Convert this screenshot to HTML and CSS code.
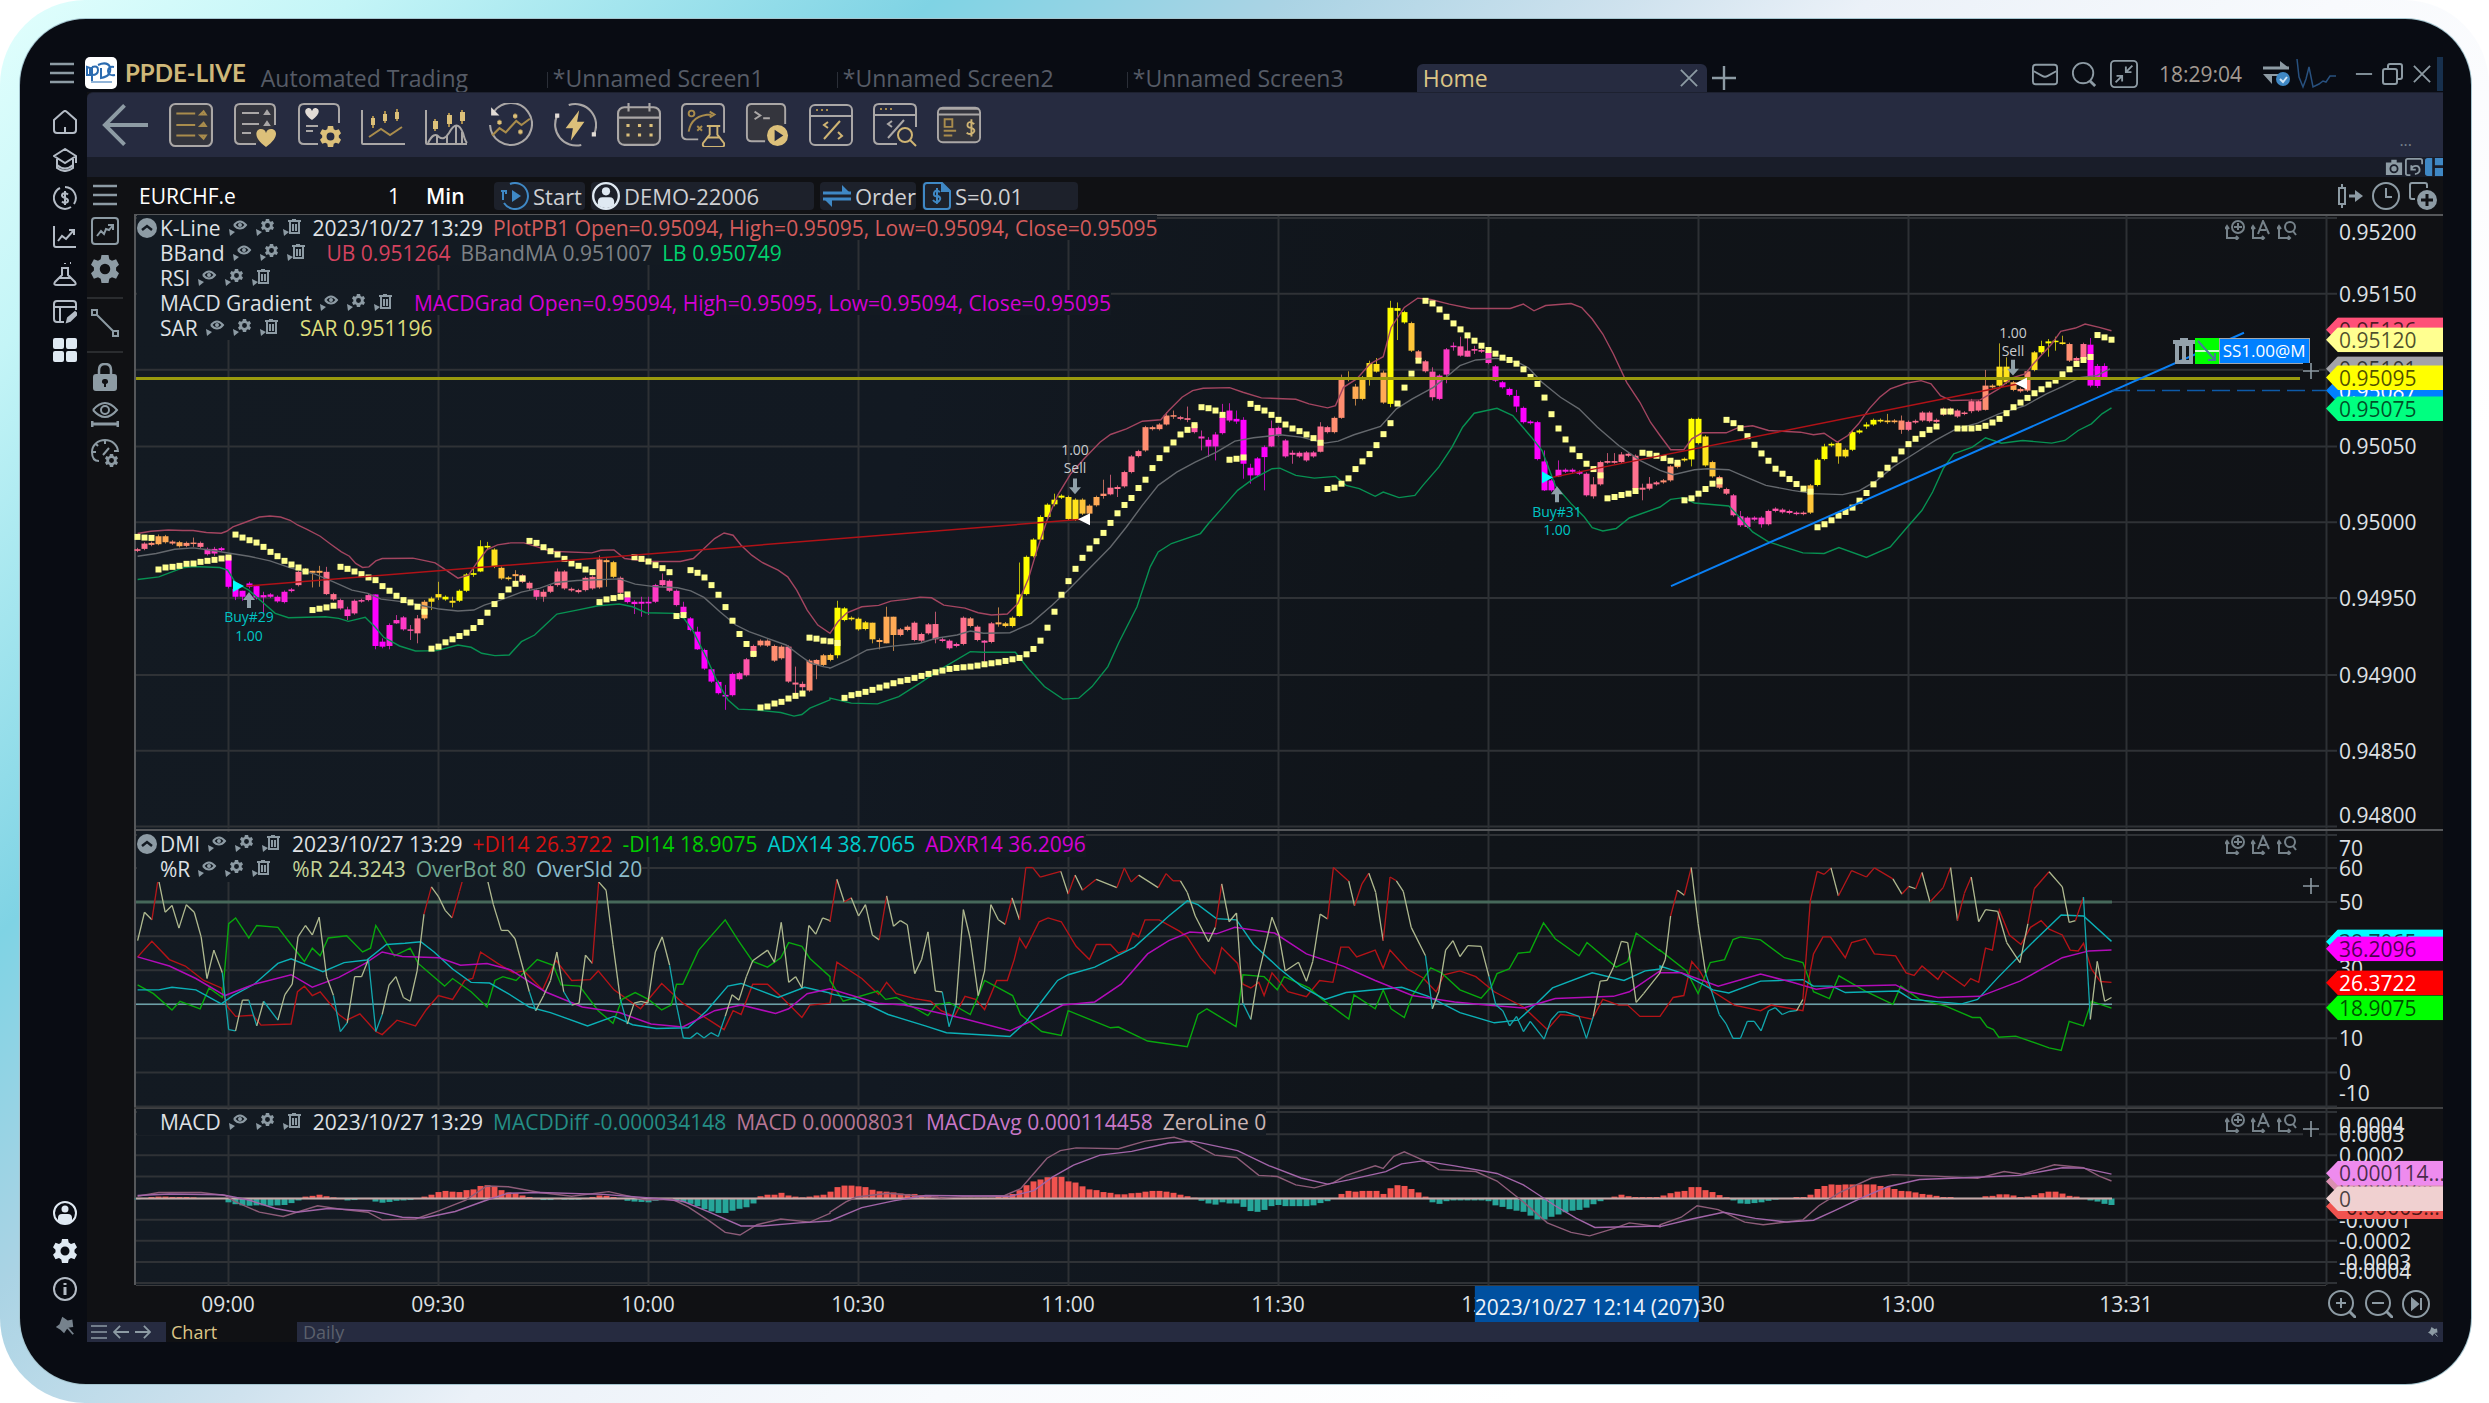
FILE: index.html
```html
<!doctype html>
<html lang="en">
	<head>
		<meta charset="utf-8" />
		<title>PPDE-LIVE</title>
		<link rel="stylesheet" href="styles.css">
	</head>
	<body>
		<!-- icon sprite -->
		<svg class="sprite" aria-hidden="true">
			<symbol id="menu" viewBox="0 0 24 24"><path d="M0 3h24M0 12h24M0 21h24" stroke-width="2.5"/></symbol>
			<symbol id="home" viewBox="0 0 24 24"><path d="M1 10 10 2q2-2 4 0l9 8v10q0 3-3 3H4q-3 0-3-3zM12 17v6"/></symbol>
			<symbol id="cap" viewBox="0 0 24 24"><path d="M12 1 1 8l11 7 11-7zM4 11v6q8 7 16 0v-6M23 8v7M4 17v3q8 6 16 0v-3"/></symbol>
			<symbol id="coin" viewBox="0 0 24 24"><path d="M12 1a11 11 0 0 1 9 17M18 21A11 11 0 1 1 7 2M15 8.500c-2-2-6-1.500-6 1 0 3 6 2 6 5 0 2.500-4 3-6 1M12 5v14"/></symbol>
			<symbol id="trend" viewBox="0 0 24 24"><path d="M1 2v19q0 2 2 2h20M5 17l4-5 4 3 8-9M16 6h5v5"/></symbol>
			<symbol id="flask" viewBox="0 0 24 24"><path d="M8 6h8M9 6v7L2 20q-2 3 2 3h16q4 0 2-3l-7-7V6M6 16h12M12 1v1M17 1h1"/></symbol>
			<symbol id="layout" viewBox="0 0 24 24"><path d="M11 22H4q-3 0-3-3V4q0-3 3-3h16q3 0 3 3v6M1 7h22M7 7v15"/><path d="m14 22 1-4 7-6 2 2-7 7z" fill="currentColor"/></symbol>
			<symbol id="grid" viewBox="0 0 24 24"><path fill="currentColor" stroke="none" d="M2 0h7q2 0 2 2v7q0 2-2 2H2q-2 0-2-2V2q0-2 2-2M15 0h7q2 0 2 2v7q0 2-2 2h-7q-2 0-2-2V2q0-2 2-2M2 13h7q2 0 2 2v7q0 2-2 2H2q-2 0-2-2v-7q0-2 2-2M15 13h7q2 0 2 2v7q0 2-2 2h-7q-2 0-2-2v-7q0-2 2-2"/></symbol>
			<symbol id="user" viewBox="0 0 24 24"><circle cx="12" cy="12" r="11"/><circle cx="12" cy="8" r="3.500" fill="currentColor" stroke="none"/><path fill="currentColor" stroke="none" d="M5 20v-3q0-4 4-4h6q4 0 4 4v3q-7 5-14 0"/></symbol>
			<symbol id="cog" viewBox="0 0 24 24"><path fill="currentColor" stroke="none" fill-rule="evenodd" d="M9 0h6l.7 3.600 2.300 1.300 3.500-1.200 2.500 4.600-2.500 2.500v2.400l2.500 2.500-2.500 4.600-3.500-1.200-2.300 1.300L15 24H9l-.7-3.600L6 19.100l-3.500 1.200L0 15.700l2.500-2.500v-2.400L0 8.300l2.500-4.600L6 4.900l2.300-1.300zM12 7.500a4.500 4.500 0 1 0 0 9 4.500 4.500 0 0 0 0-9"/></symbol>
			<symbol id="info" viewBox="0 0 24 24"><circle cx="12" cy="12" r="11"/><path d="M12 10v8M12 6v2" stroke-width="3"/></symbol>
			<symbol id="pin" viewBox="0 0 24 24"><path fill="currentColor" stroke="none" d="m9 2 6 4 5-1 1 8-6 1-4 6-4-4-5-3 4-3z"/><path d="m14 13 7 8"/></symbol>
			<symbol id="chartbox" viewBox="0 0 28 28"><rect x="1" y="1" width="26" height="26" rx="3"/><path d="m6 19 4-5 3 3 2-5 3 1 4-5M17 8h5v5"/></symbol>
			<symbol id="line" viewBox="0 0 28 28"><path d="M1 1h5v5H1zM22 22h5v5h-5zM6 6l16 16"/></symbol>
			<symbol id="lock" viewBox="0 0 24 28"><path d="M6 12V7q0-6 6-6t6 6v5" stroke-width="2.500"/><path fill="currentColor" stroke="none" fill-rule="evenodd" d="M3 11h18q3 0 3 3v11q0 3-3 3H3q-3 0-3-3V14q0-3 3-3m9 5a2.500 2.500 0 0 0-1 5v3h2v-3a2.500 2.500 0 0 0-1-5"/></symbol>
			<symbol id="eye" viewBox="0 0 28 28"><path d="M2 9q12-14 24 0-12 14-24 0"/><circle cx="14" cy="9" r="4"/><path d="M1 20v6M27 20v6M1 23h26" stroke-width="3"/></symbol>
			<symbol id="gauge" viewBox="0 0 28 28"><path d="M8 22Q1 22 1 13a13 12 0 0 1 26 0M14 1v4M1 13h4M23 12h4M12 16l6-7M5 5l2 2"/><use href="#cog" x="14" y="15" width="13" height="13"/></symbol>

			<symbol id="back" viewBox="0 0 48 42"><path d="M23 1 3 21l20 20M3 21h44" stroke-width="4"/></symbol>
			<symbol id="t-list" viewBox="0 0 42 42"><rect class="shade" x="1" y="1" width="40" height="40" rx="5"/><path class="gold" d="M7 10h18M7 21h18M7 31h18M30 11h5l-2-3zM30 22h5l-2-3zM30 31h5l-2 3z"/></symbol>
			<symbol id="t-fav" viewBox="0 0 42 44"><path class="shade" d="M22 41H6q-5 0-5-5V6q0-5 5-5h30q5 0 5 5v16"/><path d="M8 10h17M8 21h17M8 30h9M31 11h4l-2-3zM31 22h4l-2-3z"/><path class="goldFill" d="M32 44C18 34 22 26 27 26q4 0 5 4 1-4 5-4c6 0 9 8-5 18"/></symbol>
			<symbol id="t-favset" viewBox="0 0 42 44"><path d="M20 41H6q-5 0-5-5V6q0-5 5-5h30q5 0 5 5v14M8 23h12M8 28h7"/><path class="lightFill" d="M14 17C4 10 7 5 11 5q2 0 3 3 1-3 3-3c4 0 7 5-3 12"/><use href="#cog" x="22" y="23" width="21" height="21" class="goldIcon"/></symbol>
			<symbol id="t-candles" viewBox="0 0 44 42"><path d="M1 6v33q0 1 1 1h42"/><path class="gold" d="m8 33 12-8 9 6 12-8M12 12v12M24 7v12M36 5v12"/><path class="goldFill" d="M10 14h4v7h-4zM22 10h4v7h-4zM34 8h4v7h-4z"/></symbol>
			<symbol id="t-dist" viewBox="0 0 44 42"><path d="M1 6v33q0 1 1 1h40M3 39q6-12 11-6 5 4 10-4 8-15 14 0 2 8 4 10M31 22v17M12 32v7M22 32v7M37 28v11"/><path class="gold" d="M10 15v12M24 9v14M37 6v14"/><path class="goldFill" d="M8 17h5v8H8zM22 11h5v9h-5zM35 8h5v9h-5z"/></symbol>
			<symbol id="t-history" viewBox="0 0 42 42"><path d="M5 8a20 20 0 1 1-4 13"/><path class="lightFill" d="M2 4v8h8z"/><path class="gold" d="m3 31 7-7 6 4 10-11 5 4 8-6M10 16v5M25 10v5M30 25v5"/><path class="goldFill" d="M8 17h4v3H8zM23 11h4v3h-4zM28 26h4v3h-4z"/></symbol>
			<symbol id="t-flash" viewBox="0 0 42 42"><path d="M15 2a20 20 0 0 1 24 28M27 40A20 20 0 0 1 4 12"/><path class="lightFill" d="M2 10h4v4H2zM37 28h4v4h-4z"/><path class="goldFill" d="M25 7 12 24h7l-2 12 13-18h-7z"/></symbol>
			<symbol id="t-cal" viewBox="0 0 42 42"><rect class="shade" x="1" y="4" width="40" height="36" rx="6"/><path d="M11 0v8M31 0v8M1 14h40"/><path class="goldFill" d="M9 20h3v3H9zM20 20h3v3h-3zM31 20h3v3h-3zM9 29h3v3H9zM20 29h3v3h-3zM31 29h3v3h-3z"/></symbol>
			<symbol id="t-lab" viewBox="0 0 46 46"><path d="M18 38H6q-5 0-5-5V6q0-5 5-5h34q5 0 5 5v25"/><path class="gold" d="M8 30q3-18 24-18M30 9l5 3-5 3M17 24l5 5M22 24l-5 5"/><circle class="gold" cx="11" cy="11" r="3"/><path class="goldLine" d="M27 24h14M30 24v9l-7 9q-1 4 3 4h16q4 0 3-4l-7-9v-9M28 36h12"/></symbol>
			<symbol id="t-term" viewBox="0 0 44 46"><path class="shade" d="M20 40H6q-5 0-5-5V6q0-5 5-5h30q5 0 5 5v16"/><path d="m9 9 6 4-6 4M18 16h7"/><circle class="goldFill" cx="33" cy="34" r="11"/><path fill="#262b40" stroke="none" d="M30 28v12l9-6z"/></symbol>
			<symbol id="t-code" viewBox="0 0 44 42"><rect x="1" y="1" width="42" height="40" rx="5"/><path d="M1 12h42"/><path class="gold" d="M7 6h2M12 6h2M17 6h2"/><path class="goldLine" d="M31 17 15 35M19 18l-4 3 4 3M29 28l4 4-4 3"/></symbol>
			<symbol id="t-find" viewBox="0 0 44 44"><path d="M24 41H6q-5 0-5-5V6q0-5 5-5h32q5 0 5 5v18M1 12h42M31 17 15 35M19 18l-4 3 4 3"/><path class="gold" d="M7 6h2M12 6h2M17 6h2"/><circle class="goldLine" cx="32" cy="32" r="7"/><path class="goldLine" d="m37 37 6 6"/></symbol>
			<symbol id="t-pay" viewBox="0 0 46 40"><rect class="shade" x="1" y="2" width="44" height="36" rx="5"/><path d="M1 9h44M2 3h42"/><path class="gold" d="M8 14h8v8H8zM7 26h13M7 31h9"/><path class="goldLine" d="M39 19q-6-4-7 0t4 4q5 2 2 5t-7 0M36 14v18"/></symbol>

			<symbol id="mail" viewBox="0 0 28 24"><rect x="1" y="2" width="26" height="21" rx="3"/><path d="m2 9 9 5q3 2 6 0l9-5"/></symbol>
			<symbol id="search" viewBox="0 0 28 28"><circle cx="13" cy="13" r="11"/><path d="m20 21 6 6" stroke-width="3"/></symbol>
			<symbol id="collapse" viewBox="0 0 30 30"><rect x="1" y="1" width="28" height="28" rx="4"/><path d="m24 6-7 7M17 7v6h6M6 24l7-7M7 17h6v6"/></symbol>
			<symbol id="sync" viewBox="0 0 28 26"><path d="M0 7h26" stroke-width="3"/><path fill="currentColor" stroke="none" d="m17 0 9 7h-9zM0 13h15v2H9v8z"/><circle cx="20" cy="18" r="7" fill="#3f88c5" stroke="none"/><path stroke="#cfe4f5" d="m17 18 3 3 4-5"/></symbol>
			<symbol id="spark" viewBox="0 0 40 30"><path stroke="#28517f" stroke-width="1.500" d="m1 0 2 18 4 10 3-8 3-12 4 20 6-3 4-3 3 1 4-6h6"/></symbol>
			<symbol id="min" viewBox="0 0 20 20"><path d="M1 10h18"/></symbol>
			<symbol id="restore" viewBox="0 0 22 22"><rect x="1" y="6" width="14" height="15" rx="2"/><path d="M6 6V3q0-2 2-2h10q2 0 2 2v11q0 2-2 2h-3"/></symbol>
			<symbol id="close" viewBox="0 0 20 20"><path d="m1 1 18 18M19 1 1 19"/></symbol>
			<symbol id="plus" viewBox="0 0 20 20"><path d="M10 0v20M0 10h20"/></symbol>
			<symbol id="camera" viewBox="0 0 20 20"><path fill="currentColor" stroke="none" d="M7 2h6v3h6v14H1V5h6z"/><circle cx="10" cy="12" r="4" stroke="#191d29"/></symbol>
			<symbol id="reload" viewBox="0 0 20 20"><path d="M6 19H3q-2 0-2-2V3q0-2 2-2h14q2 0 2 2v4M7 12q2-4 7-3 3 2 2 6-2 3-5 3M7 8v5h5"/></symbol>
			<symbol id="tiles" viewBox="0 0 20 20"><path fill="#3f88c5" stroke="none" d="M3 0h5v20H3q-3 0-3-3V3q0-3 3-3M11 0h9v8h-9zM11 11h9v9h-9z"/></symbol>
			<symbol id="candleto" viewBox="0 0 26 24"><path d="M5 0v4M5 20v4M2 4h6v16H2z"/><path d="M12 12h8" stroke-width="3"/><path fill="currentColor" stroke="none" d="m18 6 8 6-8 6z"/></symbol>
			<symbol id="clock" viewBox="0 0 28 28"><circle cx="14" cy="14" r="13"/><path d="M14 6v9h6"/></symbol>
			<symbol id="addpage" viewBox="0 0 28 28"><path d="M6 17H3q-2 0-2-2V3q0-2 2-2h13q2 0 2 2v3"/><circle cx="18" cy="18" r="10" fill="currentColor" stroke="none"/><path stroke="#101114" stroke-width="3" d="M18 12v12M12 18h12"/></symbol>
			<symbol id="start" viewBox="0 0 28 28"><path d="M9 2a13 13 0 1 1-6 19M2 18v-9M0 9h5v3"/><path fill="currentColor" stroke="none" d="M11 8v12l9-6z"/></symbol>
			<symbol id="swap" viewBox="0 0 28 22"><path d="M0 8h28M0 14h28" stroke-width="3"/><path fill="currentColor" stroke="none" d="m19 0 8 8h-8zM1 14h8v8z"/></symbol>
			<symbol id="doc" viewBox="0 0 28 28"><path d="M19 1H4q-3 0-3 3v20q0 3 3 3h20q3 0 3-3V9M17 10q-5-3-6 1t4 3q4 2 1 5t-6-1M14 6v16"/><path fill="currentColor" d="M19 1v8h8z"/></symbol>
			<symbol id="up" viewBox="0 0 20 20"><circle cx="10" cy="10" r="10" fill="currentColor" stroke="none"/><path stroke="#131a22" stroke-width="2.500" d="m5 12 5-4 5 4"/></symbol>
			<symbol id="l-eye" viewBox="0 0 20 20"><path d="M6 7q6-7 12 0-6 7-12 0" /><circle cx="12" cy="7" r="1"/><path fill="currentColor" stroke="none" d="m1 11 6 3-5 4z"/></symbol>
			<symbol id="l-cog" viewBox="0 0 20 20"><use href="#cog" x="6" y="1" width="13" height="13"/><path fill="currentColor" stroke="none" d="m1 11 6 3-5 4z"/></symbol>
			<symbol id="l-bin" viewBox="0 0 20 20"><path d="M6 3h13M10 2h4M8 4v11h9V4M11 6v7M14 6v7"/><path fill="currentColor" stroke="none" d="m1 11 6 3-5 4z"/></symbol>
			<symbol id="s-plus" viewBox="0 0 20 20"><path d="M2 7v11h11M0 9l2-3 2 3M11 16l2 2-2 2M13 3v7M9 7h8"/><circle cx="13" cy="7" r="6"/></symbol>
			<symbol id="s-auto" viewBox="0 0 20 20"><path d="M2 7v11h11M0 9l2-3 2 3M11 16l2 2-2 2"/><path d="m7 14 5-13 6 13M9 10h6" stroke-width="2"/></symbol>
			<symbol id="s-find" viewBox="0 0 20 20"><path d="M2 7v11h11M0 9l2-3 2 3M11 16l2 2-2 2M16 11l3 4"/><circle cx="13" cy="7" r="5"/></symbol>
			<symbol id="zoomin" viewBox="0 0 28 28"><circle cx="13" cy="13" r="12"/><path d="m21 21 7 7" stroke-width="3"/><path d="M13 8v10M8 13h10"/></symbol>
			<symbol id="zoomout" viewBox="0 0 28 28"><circle cx="13" cy="13" r="12"/><path d="m21 21 7 7" stroke-width="3"/><path d="M7 13h12"/></symbol>
			<symbol id="last" viewBox="0 0 28 28"><circle cx="14" cy="14" r="13"/><path fill="currentColor" d="M10 9v10l6-5zM19 8v12"/></symbol>
			<symbol id="bin" viewBox="0 0 22 26"><path fill="currentColor" stroke="none" fill-rule="evenodd" d="M7 0h8v2h7v4h-2v20H2V6H0V2h7zM6 8v14h3V8zM13 8v14h3V8z"/></symbol>
			<symbol id="arrowl" viewBox="0 0 18 18"><path d="M8 2 1 9l7 7M1 9h17"/></symbol>
			<symbol id="arrowr" viewBox="0 0 18 18"><path d="m10 2 7 7-7 7M17 9H0"/></symbol>
		</svg>

		<div class="device">
			<div class="screen">
				<header class="titlebar">
					<button class="iconBtn" aria-label="Menu"><svg class="i24"><use href="#menu"/></svg></button>
					<svg class="logo" viewBox="0 0 32 32"><rect width="32" height="32" rx="5" fill="#fff"/><path d="M2 10v8h3v-7zM7 10v14M7 10q6-2 6 3t-6 5M13 8q9-4 12 2 2 9-9 11V11M29 10q-6-1-6 4t7 4" fill="none" stroke="#2b6bb0" stroke-width="2"/><path d="M6 25h21" stroke="#6d9bcb" stroke-width="1.500"/></svg>
					<h1 class="brand">PPDE-LIVE</h1>
					<nav class="tabs">
						<button class="tab">Automated Trading</button>
						<button class="tab">*Unnamed Screen1</button>
						<button class="tab">*Unnamed Screen2</button>
						<button class="tab">*Unnamed Screen3</button>
						<button class="tab active">Home <svg class="i18"><use href="#close"/></svg></button>
					</nav>
					<button class="iconBtn newTab" aria-label="New tab"><svg class="i24"><use href="#plus"/></svg></button>
					<div class="status">
						<button class="iconBtn" aria-label="Mail"><svg class="i26"><use href="#mail"/></svg></button>
						<button class="iconBtn" aria-label="Search"><svg class="i26"><use href="#search"/></svg></button>
						<button class="iconBtn" aria-label="Exit full screen"><svg class="i28"><use href="#collapse"/></svg></button>
						<time class="clock">18:29:04</time>
						<svg class="i28"><use href="#sync"/></svg>
						<svg class="spark"><use href="#spark"/></svg>
						<div class="windowBtns">
							<button class="iconBtn" aria-label="Minimize"><svg class="i18"><use href="#min"/></svg></button>
							<button class="iconBtn" aria-label="Restore"><svg class="i22"><use href="#restore"/></svg></button>
							<button class="iconBtn" aria-label="Close"><svg class="i18"><use href="#close"/></svg></button>
						</div>
						<span class="edge"></span>
					</div>
				</header>

				<div class="body">
					<nav class="sidenav">
						<button class="iconBtn" aria-label="Home"><svg class="i24"><use href="#home"/></svg></button>
						<button class="iconBtn" aria-label="Academy"><svg class="i24"><use href="#cap"/></svg></button>
						<button class="iconBtn" aria-label="Funds"><svg class="i24"><use href="#coin"/></svg></button>
						<button class="iconBtn" aria-label="Charts"><svg class="i24"><use href="#trend"/></svg></button>
						<button class="iconBtn" aria-label="Lab"><svg class="i24"><use href="#flask"/></svg></button>
						<button class="iconBtn" aria-label="Layouts"><svg class="i24"><use href="#layout"/></svg></button>
						<button class="iconBtn bright" aria-label="Apps"><svg class="i24"><use href="#grid"/></svg></button>
						<span class="spacer"></span>
						<button class="iconBtn bright" aria-label="Account"><svg class="i24"><use href="#user"/></svg></button>
						<button class="iconBtn bright" aria-label="Settings"><svg class="i24"><use href="#cog"/></svg></button>
						<button class="iconBtn" aria-label="About"><svg class="i24"><use href="#info"/></svg></button>
						<button class="iconBtn dim" aria-label="Pin"><svg class="i22"><use href="#pin"/></svg></button>
					</nav>

					<main class="workspace">
						<div class="toolbar">
							<button class="iconBtn" aria-label="Back"><svg class="back"><use href="#back"/></svg></button>
							<button class="toolBtn" aria-label="Watch list"><svg><use href="#t-list"/></svg></button>
							<button class="toolBtn" aria-label="Favorites"><svg><use href="#t-fav"/></svg></button>
							<button class="toolBtn" aria-label="Favorite settings"><svg><use href="#t-favset"/></svg></button>
							<button class="toolBtn" aria-label="Chart"><svg><use href="#t-candles"/></svg></button>
							<button class="toolBtn" aria-label="Distribution"><svg><use href="#t-dist"/></svg></button>
							<button class="toolBtn" aria-label="History"><svg><use href="#t-history"/></svg></button>
							<button class="toolBtn" aria-label="Quick trade"><svg><use href="#t-flash"/></svg></button>
							<button class="toolBtn" aria-label="Calendar"><svg><use href="#t-cal"/></svg></button>
							<button class="toolBtn" aria-label="Strategy lab"><svg><use href="#t-lab"/></svg></button>
							<button class="toolBtn" aria-label="Run script"><svg><use href="#t-term"/></svg></button>
							<button class="toolBtn" aria-label="Editor"><svg><use href="#t-code"/></svg></button>
							<button class="toolBtn" aria-label="Inspect script"><svg><use href="#t-find"/></svg></button>
							<button class="toolBtn" aria-label="Payments"><svg><use href="#t-pay"/></svg></button>
							<span class="more">...</span>
						</div>
						<div class="strip">
							<button class="iconBtn" aria-label="Snapshot"><svg class="i18"><use href="#camera"/></svg></button>
							<button class="iconBtn" aria-label="Reload"><svg class="i18"><use href="#reload"/></svg></button>
							<button class="iconBtn" aria-label="Tiles"><svg class="i18"><use href="#tiles"/></svg></button>
						</div>

						<div class="content">
							<div class="tools">
								<button class="iconBtn" aria-label="Tool menu"><svg class="i24"><use href="#menu"/></svg></button>
								<button class="iconBtn" aria-label="Indicator"><svg class="i28"><use href="#chartbox"/></svg></button>
								<button class="iconBtn" aria-label="Chart settings"><svg class="i28"><use href="#cog"/></svg></button>
								<hr />
								<button class="iconBtn" aria-label="Trend line"><svg class="i28"><use href="#line"/></svg></button>
								<hr />
								<button class="iconBtn" aria-label="Lock"><svg class="i28"><use href="#lock"/></svg></button>
								<button class="iconBtn" aria-label="Show drawings"><svg class="i28"><use href="#eye"/></svg></button>
								<button class="iconBtn" aria-label="Speed"><svg class="i28"><use href="#gauge"/></svg></button>
							</div>

							<section class="chart">
								<div class="instrument">
									<input class="symbol" type="text" value="EURCHF.e" aria-label="Symbol" />
									<input class="count" type="text" value="1" aria-label="Interval" />
									<span class="unit">Min</span>
									<button class="pill start"><svg class="i28 blue"><use href="#start"/></svg>Start</button>
									<button class="pill account"><svg class="i28 bright"><use href="#user"/></svg>DEMO-22006</button>
									<button class="pill order"><svg class="i28 blue"><use href="#swap"/></svg>Order</button>
									<button class="pill size"><svg class="i28 blue"><use href="#doc"/></svg>S=0.01</button>
									<span class="right">
										<button class="iconBtn" aria-label="Shift"><svg class="i26"><use href="#candleto"/></svg></button>
										<button class="iconBtn" aria-label="Time"><svg class="i28"><use href="#clock"/></svg></button>
										<button class="iconBtn" aria-label="Add"><svg class="i28"><use href="#addpage"/></svg></button>
									</span>
								</div>

								<div class="panel price" id="price">
									<div class="plot">
										<svg class="canvas" preserveAspectRatio="none"></svg>
										<div class="legend">
											<div class="row"><svg class="i20 fold"><use href="#up"/></svg><b>K-Line</b><i class="acts"></i><span>2023/10/27 13:29</span><span class="coral">PlotPB1 Open=0.95094, High=0.95095, Low=0.95094, Close=0.95095</span></div>
											<div class="row"><b>BBand</b><i class="acts wide"></i><span class="rose">UB 0.951264</span><span class="gray">BBandMA 0.951007</span><span class="green">LB 0.950749</span></div>
											<div class="row"><b>RSI</b><i class="acts"></i></div>
											<div class="row"><b>MACD Gradient</b><i class="acts wide"></i><span class="magenta">MACDGrad Open=0.95094, High=0.95095, Low=0.95094, Close=0.95095</span></div>
											<div class="row"><b>SAR</b><i class="acts wide"></i><span class="yellow">SAR 0.951196</span></div>
										</div>
										<div class="orderTag">
											<svg class="bin"><use href="#bin"/></svg>
											<svg class="dir" viewBox="0 0 24 26"><rect width="24" height="26" fill="#00ff00"/><path d="M0 13h24" stroke="#c8ffc8" stroke-width="2"/><path d="m3 3 17 19M20 15v7h-7" stroke="#4a7a9a" stroke-width="2" fill="none"/></svg>
											<span>SS1.00@M</span>
										</div>
									</div>
									<div class="axis"></div>
								</div>

								<div class="panel dmi" id="dmi">
									<div class="plot">
										<svg class="canvas" preserveAspectRatio="none"></svg>
										<div class="legend">
											<div class="row"><svg class="i20 fold"><use href="#up"/></svg><b>DMI</b><i class="acts"></i><span>2023/10/27 13:29</span><span class="red">+DI14 26.3722</span><span class="lime">-DI14 18.9075</span><span class="cyan">ADX14 38.7065</span><span class="magenta">ADXR14 36.2096</span></div>
											<div class="row"><b>%R</b><i class="acts wide"></i><span class="cream">%R 24.3243</span><span class="sage">OverBot 80</span><span class="sky">OverSld 20</span></div>
										</div>
									</div>
									<div class="axis"></div>
								</div>

								<div class="panel macd" id="macd">
									<div class="plot">
										<svg class="canvas" preserveAspectRatio="none"></svg>
										<div class="legend">
											<div class="row"><b>MACD</b><i class="acts"></i><span>2023/10/27 13:29</span><span class="teal">MACDDiff -0.000034148</span><span class="mauve">MACD 0.00008031</span><span class="violet">MACDAvg 0.000114458</span><span class="pale">ZeroLine 0</span></div>
										</div>
									</div>
									<div class="axis"></div>
								</div>

								<div class="timeAxis">
									<div class="times" id="times"></div>
									<div class="zoomBtns">
										<button class="iconBtn" aria-label="Zoom in"><svg class="i28"><use href="#zoomin"/></svg></button>
										<button class="iconBtn" aria-label="Zoom out"><svg class="i28"><use href="#zoomout"/></svg></button>
										<button class="iconBtn" aria-label="Go to last"><svg class="i28"><use href="#last"/></svg></button>
									</div>
								</div>
							</section>
						</div>

						<footer class="sheets">
							<span class="sheetNav">
								<button class="iconBtn" aria-label="Sheets"><svg class="i16"><use href="#menu"/></svg></button>
								<button class="iconBtn" aria-label="Previous"><svg class="i16"><use href="#arrowl"/></svg></button>
								<button class="iconBtn" aria-label="Next"><svg class="i16"><use href="#arrowr"/></svg></button>
							</span>
							<button class="sheet active">Chart</button>
							<button class="sheet">Daily</button>
							<svg class="i12 sheetPin"><use href="#pin"/></svg>
						</footer>
					</main>
				</div>
			</div>
		</div>

		<script type="text/javascript" src="chart.js"></script>
	</body>
</html>
```

FILE: styles.css
```css
* {
	box-sizing: border-box;
}

body {
	margin: 0;
	min-height: 100vh;
	display: flex;
	background: #ffffff;
	font-family: "Open Sans", "Noto Sans", sans-serif;
	font-size: 21px;
	line-height: 24px;
	color: #dfe1e5;
}

button, input {
	font: inherit;
	color: inherit;
	background: none;
	border: none;
	padding: 0;
	margin: 0;
}

button {
	cursor: pointer;
}

svg {
	display: block;
	flex: none;
	fill: none;
	stroke: currentColor;
	stroke-width: 2;
}

.sprite {
	position: absolute;
	width: 0;
	height: 0;
}

.i12 { width: 12px; height: 12px; }
.i16 { width: 16px; height: 16px; }
.i18 { width: 18px; height: 18px; }
.i20 { width: 20px; height: 20px; }
.i22 { width: 22px; height: 22px; }
.i24 { width: 24px; height: 24px; }
.i26 { width: 26px; height: 26px; }
.i28 { width: 28px; height: 28px; }

.iconBtn {
	display: flex;
	flex: none;
	color: #8d9ba4;
}

.bright { color: #dfe9f2; }
.blue { color: #3f88c5; }
.dim { color: #76828c; }

.gold { stroke: #a98c4c; fill: none; }
.goldLine { stroke: #cfb473; fill: none; }
.goldFill { stroke: none; fill: #dcc07a; }
.goldIcon { color: #dcc07a; }
.lightFill { stroke: none; fill: #e2dcd6; }
.shade { fill: #34353d; }

/* device frame */

.device {
	flex: 1;
	display: flex;
	padding: 19px 18px 19px 20px;
	border-radius: 85px;
	background: linear-gradient(135deg, #e2fffd 0%, #c4f5f7 9%, #7fd3e4 24%, #aad3e4 33%, #cfe2ee 42%, #ebf1f8 48%, #f8fafd 60%, #ffffff 75%);
}

.screen {
	flex: 1;
	min-width: 0;
	display: flex;
	flex-direction: column;
	padding-bottom: 42px;
	border-radius: 66px;
	background: #090c13;
	box-shadow: 0 0 0 1px #a5c5cf;
}

.titlebar {
	display: flex;
	align-items: flex-end;
	height: 73px;
	padding: 0 28px 0 30px;
}

.titlebar > .iconBtn {
	margin-bottom: 7px;
}

.logo {
	width: 32px;
	height: 32px;
	margin: 0 8px 3px 11px;
	stroke: none;
}

.brand {
	margin: 0 15px 4px 0;
	font-family: Lato, sans-serif;
	font-size: 24px;
	line-height: 30px;
	font-weight: 700;
	color: #cfb879;
	white-space: nowrap;
}

.tabs {
	display: flex;
	align-items: flex-end;
}

.tab {
	width: 290px;
	height: 28px;
	padding: 0 9px 0 6px;
	display: flex;
	align-items: center;
	justify-content: space-between;
	font-size: 23px;
	line-height: 28px;
	color: #565b66;
	text-align: left;
	white-space: nowrap;
	background: linear-gradient(#2b2f38, #2b2f38) 0 70% / 1px 16px no-repeat;
}

.tab:first-child {
	width: 286px;
	padding-left: 0;
	background: none;
}

.tab.active {
	color: #dcc587;
	background: #262b40;
	border-radius: 6px 6px 0 0;
}

.tab.active svg {
	color: #8d9ba4;
}

.titlebar > .newTab {
	margin: 0 0 2px 5px;
}

.status {
	margin-left: auto;
	height: 36px;
	display: flex;
	align-items: center;
	gap: 13px;
	color: #8d9ba4;
}

.clock {
	margin: 0 8px;
	color: #a29a92;
}

.spark {
	width: 40px;
	height: 32px;
	margin-left: -8px;
}

.windowBtns {
	display: flex;
	align-items: center;
	gap: 9px;
	margin-left: 6px;
}

.edge {
	width: 6px;
	height: 34px;
	margin-left: -7px;
	background: #17304d;
}

/* left navigation and workspace */

.body {
	flex: 1;
	display: flex;
	min-height: 0;
	padding-right: 28px;
}

.sidenav {
	width: 67px;
	padding: 18px 0 5px;
	display: flex;
	flex-direction: column;
	align-items: center;
	gap: 14px;
}

.sidenav .iconBtn {
	margin-left: 22px;
}

.sidenav .iconBtn:not(.bright):not(.dim) {
	color: #b4bcc6;
}

.spacer {
	flex: 1;
}

.workspace {
	flex: 1;
	min-width: 0;
	display: flex;
	flex-direction: column;
	background: #101114;
}

.toolbar {
	height: 65px;
	display: flex;
	align-items: center;
	gap: 20px;
	padding: 0 15px;
	background: #262b40;
	border-top: 1px solid #1d2130;
	border-top-left-radius: 6px;
}

.toolBtn {
	color: #aaa7a6;
}

.toolBtn svg {
	width: 44px;
	height: 44px;
}

.back {
	width: 47px;
	height: 42px;
}

.more {
	margin: 30px 16px 0 auto;
	font-size: 16px;
	color: #76828c;
}

.strip {
	height: 20px;
	display: flex;
	justify-content: flex-end;
	align-items: center;
	gap: 2px;
	background: #191d29;
}

.content {
	flex: 1;
	min-height: 0;
	display: flex;
}

.tools {
	width: 47px;
	display: flex;
	flex-direction: column;
	align-items: center;
	gap: 10px;
	padding: 6px 11px 0 0;
}

.tools hr {
	width: 36px;
	margin: 4px 0 0;
	border: none;
	border-top: 2px solid #2a2c2f;
	align-self: flex-start;
}

.chart {
	flex: 1;
	min-width: 0;
	display: flex;
	flex-direction: column;
}

.instrument {
	height: 37px;
	display: flex;
	align-items: center;
	gap: 6px;
	padding: 0 6px 0 5px;
	color: #ffffff;
}

.symbol { width: 200px; }
.count { width: 75px; padding-right: 20px; text-align: right; }
.unit { width: 62px; font-weight: 600; }

.pill {
	height: 28px;
	display: flex;
	align-items: center;
	gap: 4px;
	border-radius: 4px;
	background: #1d212b;
	color: #cfd0d3;
	font-size: 22px;
	white-space: nowrap;
}

.pill.start { width: 91px; padding-left: 7px; }
.pill.account { width: 223px; padding-left: 1px; }
.pill.order { width: 96px; padding-left: 3px; }
.pill.size { width: 156px; padding-left: 1px; }

.right {
	margin-left: auto;
	display: flex;
	align-items: center;
	gap: 9px;
}

/* chart panels */

.panel {
	display: flex;
	min-height: 0;
	border-top: 2px solid #55575a;
}

.price { flex: 616 1 0; }
.dmi { flex: 278 1 0; }
.macd { flex: 177 1 0; border-top-color: #404143; }

.plot {
	position: relative;
	flex: 1;
	min-width: 0;
	border-left: 2px solid #55575a;
	background: linear-gradient(100deg, #131a22 0%, #121922 35%, #101419 60%, #101216 100%);
}

.canvas {
	position: absolute;
	width: 100%;
	height: 100%;
	overflow: visible;
	stroke-width: 1;
}

.canvas * {
	vector-effect: non-scaling-stroke;
}

.legend {
	position: relative;
	width: fit-content;
	padding: 1px 0 0 1px;
}

.price .legend {
	padding-top: 0;
	margin-top: -1px;
}

.row {
	width: fit-content;
	height: 25px;
	display: flex;
	align-items: center;
	padding-left: 23px;
	white-space: nowrap;
	background: #131a22;
}

.row b {
	font-weight: 400;
	color: #dfe1e5;
}

.row span {
	margin-right: 10px;
}

.row span:last-child {
	margin-right: 0;
}

.fold {
	margin: 0 3px 0 -23px;
	color: #8d9ba4;
}

.acts {
	display: flex;
	gap: 7px;
	margin: 0 11px 0 7px;
	color: #8d9ba4;
}

.acts.wide {
	margin-right: 21px;
}

.coral { color: #d45c5c; }
.rose { color: #d5425f; }
.gray { color: #7d8186; }
.green { color: #00d26f; }
.magenta { color: #d400d4; }
.yellow { color: #dddd7c; }
.red { color: #d41111; }
.lime { color: #00cc00; }
.cyan { color: #00cccc; }
.cream { color: #c5d498; }
.sage { color: #6fa58f; }
.sky { color: #8cbccb; }
.teal { color: #238e86; }
.mauve { color: #b77796; }
.violet { color: #c878c8; }
.pale { color: #cbb5b5; }

.scaleBtns {
	position: absolute;
	top: 4px;
	right: 29px;
	display: flex;
	gap: 6px;
	color: #76828a;
}

.addMark {
	position: absolute;
	width: 16px;
	height: 16px;
	transform: translate(-50%, -50%);
	color: #8d9ba4;
	background: #101216;
}

.mark {
	position: absolute;
	transform: translate(-50%, -50%);
	font-size: 14px;
	line-height: 18px;
	color: #c9cbce;
}

.mark.buy {
	color: #00c4c4;
}

.orderTag {
	position: absolute;
	left: 93%;
	top: 20%;
	height: 26px;
	display: flex;
	margin-top: -1px;
}

.orderTag .bin { width: 22px; height: 26px; color: #93a1ab; }
.orderTag .dir { width: 24px; height: 26px; stroke: none; }

.orderTag span {
	padding: 0 3px;
	font-size: 17px;
	line-height: 24px;
	color: #ffffff;
	background: #0080ff;
	border: 1px solid #a0a6ae;
}

.axis {
	position: relative;
	width: 117px;
	overflow: hidden;
}

.axis .tick {
	position: absolute;
	left: 13px;
	transform: translateY(-50%);
}

.axis .tag {
	position: absolute;
	left: 0;
	right: 0;
	height: 25px;
	padding-left: 13px;
	transform: translateY(-50%);
	line-height: 25px;
	color: rgba(0, 0, 0, 0.7);
	white-space: nowrap;
	clip-path: polygon(12px 0, 100% 0, 100% 100%, 12px 100%, 0 50%);
}

.timeAxis {
	height: 37px;
	display: flex;
}

.times {
	position: relative;
	flex: 1;
	margin-left: 2px;
	border-top: 1px solid #3a3b3d;
}

.times span {
	position: absolute;
	top: 50%;
	transform: translate(-50%, -50%);
}

.times .cursor {
	height: 100%;
	padding: 5px 0 0;
	line-height: 32px;
	color: #eef3f8;
	background: #0050a0;
	white-space: nowrap;
}

.zoomBtns {
	width: 117px;
	display: flex;
	align-items: center;
	gap: 9px;
	padding-left: 2px;
}

.sheets {
	height: 20px;
	display: flex;
	align-items: center;
	background: #262b40;
}

.sheetNav {
	display: flex;
	gap: 6px;
	width: 79px;
	padding-left: 4px;
}

.sheet {
	height: 20px;
	padding: 0 6px;
	font-size: 18px;
	line-height: 20px;
	color: #5b606c;
}

.sheet.active {
	width: 131px;
	padding: 0 5px;
	text-align: left;
	color: #dcc587;
	background: #101114;
}

.sheetPin {
	margin: 0 4px 0 auto;
	color: #8d9ba4;
}
```

FILE: chart.js
```js
const NS = "http://www.w3.org/2000/svg";
const X0 = 137.5;	//first bar
const STEP = 7;		//bar spacing

const panels = {
	price: {x: 136, y: 215, w: 2190, h: 614},
	dmi: {x: 136, y: 831, w: 2190, h: 276},
	macd: {x: 136, y: 1109, w: 2190, h: 175}
};

//blocks the series are stored in: origin and units per pixel
const SX = 1568 / 830;
const SY = 1568 / 593;
const block = {
	a: [0, 400, SX, 3], b: [830, 250, SX, 3], c: [1660, 280, SX, 3],
	d: [0, 810, SX, SY], e: [830, 810, SX, SY], f: [1660, 810, SX, SY]
};

function add(panel, tag, attrs) {
	let el = document.createElementNS(NS, tag);
	for (let k in attrs) {
		el.setAttribute(k, attrs[k]);
	}
	document.querySelector("#" + panel + " .canvas").appendChild(el);
	return el;
}

function points(parts) {
	let out = [];
	for (let key in parts) {
		let b = block[key];
		parts[key].trim().split(/\s+/).forEach(p => {
			let xy = p.split(",");
			out.push([b[0] + xy[0] / b[2], b[1] + xy[1] / b[3]]);
		});
	}
	return out;
}

function line(panel, color, parts, width) {
	let pts = points(parts).map(p => p[0].toFixed(1) + "," + p[1].toFixed(1)).join(" ");
	add(panel, "polyline", {points: pts, stroke: color, "stroke-width": width || 1.4});
}

function place(panel, el, x, y) {
	let p = panels[panel];
	if (x !== null) {
		el.style.left = ((x - p.x) / p.w * 100).toFixed(3) + "%";
	}
	el.style.top = ((y - p.y) / p.h * 100).toFixed(3) + "%";
}

/* grid */
const gridY = {
	price: [217, 293, 369, 446, 522, 598, 675, 751, 827],
	dmi: [835, 868, 902, 936, 970, 1004, 1038, 1072, 1106],
	macd: [1112, 1134, 1155, 1176, 1198, 1219, 1240, 1261, 1282]
};
const gridX = [228, 438, 648, 858, 1068, 1278, 1488, 1698, 1908, 2126, 2326];

for (let name in panels) {
	let p = panels[name];
	document.querySelector("#" + name + " .canvas").setAttribute("viewBox", [p.x, p.y, p.w, p.h].join(" "));
	gridY[name].forEach(y => add(name, "line", {x1: p.x, x2: 2337, y1: y, y2: y, stroke: "#2f3236", "stroke-width": 2}));
	gridX.forEach(x => add(name, "line", {x1: x + .5, x2: x + .5, y1: p.y, y2: p.y + p.h, stroke: "#2d3034", "stroke-width": 2}));
}

/* price bars: level(0 low - 9 high), top, bottom, wick high, wick low */
const bars = {
a: `4,447,452 4,430,446 5,428,434 6,408,432,403,435 6,408,426 5,424,430 6,426,438 5,428,437 5,427,431,412,440 4,428,440
2,446,462 2,446,460,440,467 1,444,450 0,468,560,465,565 0,566,590,560,600 0,572,590,572,602 0,550,560,545,565 0,558,592,555,598 1,585,592,575,640 1,583,590
1,590,604 1,575,606 2,568,573 4,515,555 5,508,516 6,512,518,512,562 6,512,518,497,560 4,515,582,500,585 4,582,598 3,600,625
2,628,648,620,660 3,602,640 3,600,604 3,585,600 0,583,738,583,748 0,725,740,715,745 1,675,738,670,748 2,660,670,645,672 2,652,688 3,688,692,675,720
4,655,700,645,730 6,605,655,600,660 8,595,605,590,630 8,582,592,545,600 9,590,598 8,602,608,590,622 9,572,602 9,523,572 9,519,524,505,530 9,438,514,420,516
9,437,442,425,450 8,448,500 7,503,535 7,532,537 6,522,528,510,545 4,526,545 4,548,565 3,570,590,568,600 4,575,590,568,605 4,558,575
4,514,555,505,560 4,514,565 4,566,571 4,570,576 4,533,570 4,530,565 5,478,562,466,566 6,480,486,475,560 7,486,530 4,533,578
1,590,606 1,605,612,600,642 1,605,611,590,650 1,605,610,590,645 2,555,605 3,540,555,520,560 3,542,572 2,572,615 1,620,640,605,645 0,655,690
0,695,748,680,750 0,750,806 0,808,845 0,846,880 0,885,890,855,930 1,822,886 2,820,838 3,778,826 4,738,768 5,722,736
5,722,737 5,738,782 5,740,775 4,740,845 4,848,854,800,880 4,852,862,845,880 5,782,872 5,780,795,778,838 6,766,795`,
b: `7,1215,1230 9,1073,1216,1052,1225 9,1075,1110 8,1103,1108 8,1106,1138 8,1117,1137 7,1118,1168,1118,1180 6,1170,1176,1165,1198 6,1100,1180,1070,1180 6,1100,1155,1100,1203
5,1138,1155 5,1130,1140 4,1118,1170 4,1152,1172 4,1123,1150 4,1122,1168,1085,1180 3,1168,1173 3,1172,1195 3,1182,1188 4,1103,1182
5,1105,1128 4,1130,1170 3,1172,1178,1170,1235 4,1120,1176 6,1117,1123,1072,1130 7,1120,1128 8,1103,1128 9,1033,1098,937,1100 9,920,1032 9,868,918
9,800,868,795,870 9,763,800 9,748,762,730,768 9,736,742 8,740,806 8,748,808 7,748,790 6,766,790 6,740,765 5,730,737,688,745
4,712,732,673,735 4,710,716,705,740 4,665,708 4,618,665 4,602,617 5,530,600 5,530,536 5,522,536 5,495,522,485,525 5,494,498,480,505
4,500,505 4,503,508,468,515 3,520,545 2,558,564,540,600 1,568,588,560,620 1,552,588,545,630 1,500,548,460,552 1,480,510,458,515 0,505,513,480,520 0,508,640,500,685
0,652,675,640,700 0,624,675 0,590,620,585,720 2,533,588,510,590 2,532,555 2,570,618 3,607,613,600,640 3,607,618 3,606,630 3,606,618
4,528,604,515,606 4,530,545 5,502,545 5,382,502,372,505 7,381,387,362,392 6,408,445,400,465 7,380,445 8,337,380,330,405 8,340,363,322,366 6,366,456,360,460
9,171,460,150,470 9,172,180,155,268 9,184,215 7,217,300 5,302,326 4,332,362 3,363,440,350,450 2,375,445 2,296,372,292,398 2,285,288,275,300
3,287,315,258,318 3,300,318,258,318 3,295,300,285,310 3,298,303 2,303,337 1,347,390 0,395,410 0,415,433 0,436,468,418,485 0,472,515
0,513,518 0,515,626 0,633,720,600,722 0,690,720 1,658,678,630,680 1,658,664 1,658,664 1,664,670 3,670,735 4,702,738,680,745
4,635,702 4,632,637,608,640 4,632,637,608,640 4,612,635,605,640 4,610,616 4,616,715 4,712,718,700,750 4,700,715,680,720 4,696,702`,
c: `5,600,606 5,558,600 6,545,560 8,535,540 9,415,537,412,558 9,415,488 8,468,555 7,545,588 5,590,622 4,626,640
3,645,705 2,708,735,692,740 2,712,740 2,712,718 2,712,732,708,742 3,692,732 3,685,692 3,688,696 3,692,698 3,697,701
4,697,701 7,615,697 9,538,614 9,498,536,490,540 9,490,495 8,488,528,485,550 8,508,528 9,455,508 9,450,456 9,432,438,425,445
9,418,432 8,418,423 7,420,425,400,430 6,420,425 5,420,448,405,460 4,424,448 4,421,426 4,396,420 4,396,422 4,418,424
4,385,402 4,385,400 4,390,408 4,396,400 4,362,392,355,398 4,362,390 5,315,388,268,390 6,315,320 8,258,315,188,318 8,258,305,230,310
6,305,328 5,325,332 5,272,330 8,215,268 9,196,215,180,220 9,182,188,175,228 9,180,184,168,210 8,185,190,165,192 5,190,240 4,232,240
4,190,235 0,192,315,172,320 0,256,316,250,322 0,256,290,248,296`
};

let idx = 0;
for (let key in bars) {
	let b = block[key];
	bars[key].trim().split(/\s+/).forEach(item => {
		let v = item.split(",").map(Number);
		let g = Math.round(v[0] / 9 * 255);
		let color = "rgb(255," + g + "," + (255 - g) + ")";
		let x = X0 + STEP * idx++;
		let y = n => b[1] + n / b[3];
		let high = v[3] === undefined ? v[1] - 4 : v[3];
		let low = v[4] === undefined ? v[2] + 4 : v[4];
		add("price", "line", {x1: x, x2: x, y1: y(high), y2: y(low), stroke: color, "stroke-opacity": .7});
		add("price", "rect", {x: x - 3, y: y(v[1]), width: 6, height: Math.max(1.5, y(v[2]) - y(v[1])), fill: color, stroke: "none"});
	});
}

/* bollinger bands */
line("price", "#a34560", {
	a: "260,400 285,393 318,389 345,391 365,391 390,397 418,399 428,393 440,380 465,365 490,350 510,347 530,350 548,360 562,374 580,387 605,408 625,432 645,455 660,468 672,490 685,502 697,500 710,482 722,475 780,474 805,482 822,488 840,507 865,534 885,525 900,490 920,448 940,434 965,428 990,428 1015,440 1040,453 1118,458 1135,450 1160,449 1180,475 1225,484 1285,484 1310,475 1330,445 1350,415 1368,398 1385,405 1400,435 1420,465 1440,487 1470,510 1488,530 1505,570 1525,630 1545,675 1568,700",
	b: "0,1150 15,1115 32,1088 60,1070 92,1066 115,1053 145,1048 170,1041 192,1043 215,1065 255,1074 280,1088 305,1095 335,1092 355,1060 375,985 390,905 410,810 430,735 455,670 480,625 510,575 530,552 560,535 590,512 625,508 640,480 665,440 685,420 705,413 755,411 780,425 815,442 880,446 905,460 940,472 955,465 970,410 995,385 1020,340 1045,318 1060,230 1085,170 1110,142 1135,146 1170,160 1210,173 1285,173 1310,160 1330,180 1352,164 1400,158 1420,170 1440,205 1460,250 1480,310 1505,395 1530,455 1550,515 1568,555",
	c: "0,465 20,508 45,508 60,475 80,457 125,457 150,440 175,436 205,450 265,455 290,463 310,458 335,485 355,465 375,430 395,385 415,350 435,325 465,308 493,300 512,310 530,345 550,360 605,358 640,325 665,292 690,280 705,250 740,190 757,152 785,142 803,130 830,140 853,150"
});
line("price", "#64686d", {
	a: "260,468 295,460 330,447 365,443 400,450 425,457 470,468 510,482 550,504 595,522 630,545 665,570 695,580 720,597 755,604 790,614 830,627 865,633 895,630 915,615 945,600 985,576 1020,564 1050,547 1090,541 1170,536 1200,552 1240,560 1280,563 1305,572 1330,592 1360,635 1390,675 1415,695 1450,715 1485,735 1510,765 1530,788 1555,800 1568,804",
	b: "0,1255 35,1230 70,1200 110,1190 170,1180 200,1165 240,1155 265,1143 290,1150 340,1148 380,1120 420,1065 450,1020 490,955 530,890 560,830 590,765 620,705 655,665 690,635 730,605 765,572 800,562 850,553 890,560 935,578 960,572 990,553 1040,528 1070,475 1100,445 1140,410 1160,385 1190,345 1220,328 1260,323 1300,335 1320,352 1345,395 1380,440 1415,475 1450,530 1490,585 1530,630 1568,660",
	c: "0,570 25,583 65,568 90,565 130,568 155,585 200,615 250,630 290,640 345,643 375,632 410,600 440,560 480,520 520,480 560,445 600,428 640,400 690,375 730,340 760,318 795,290 825,285 850,265"
});
line("price", "#079152", {
	a: "260,538 300,530 345,503 365,499 415,502 430,510 445,548 470,570 495,605 520,640 545,653 615,650 640,655 658,664 690,652 708,680 725,712 755,738 785,753 825,752 865,735 890,742 910,760 935,767 962,765 985,725 1010,705 1030,675 1052,642 1090,630 1130,617 1170,612 1195,620 1220,638 1275,640 1292,655 1310,695 1335,775 1355,845 1375,900 1395,928 1425,930 1475,938 1500,949 1515,944 1530,925 1568,900",
	b: "0,1345 40,1360 90,1362 130,1340 170,1300 210,1257 265,1205 290,1207 350,1207 375,1257 405,1310 440,1348 470,1345 495,1310 525,1250 545,1180 580,1070 605,950 620,905 645,880 700,850 715,820 740,775 770,720 800,685 835,655 850,653 880,675 915,683 955,678 975,705 1000,715 1030,738 1045,725 1075,742 1105,735 1120,705 1150,650 1175,590 1195,530 1217,488 1260,473 1290,495 1325,560 1345,600 1370,705 1400,760 1425,800 1440,832 1460,842 1485,835 1510,803 1568,770",
	c: "0,680 20,657 45,652 65,668 130,677 150,710 175,755 205,785 270,818 310,820 338,802 390,832 435,800 465,745 495,690 515,635 535,565 555,520 590,500 615,472 645,488 685,480 740,488 765,480 790,450 815,430 835,400 853,382"
});

/* parabolic SAR: block, first bar, values */
const sar = [
	["a", 0, "410,412,413"], ["a", 3, "508,502,500,497,491,490,485,482,479,475,472"],
	["a", 14, "403,412,420,427,440,455,468,482,493,502,514"], ["a", 25, "630,626,622,617"],
	["a", 29, "500,506,514,522,532,540,558,572,587,600,607,620,635"],
	["a", 42, "746,740,727,718,708,698,684,666,638,612,588,568,551,535"],
	["a", 56, "422,428,441,453,463,476,490,497,508,516"], ["a", 66, "606,598,594,590,583"],
	["a", 71, "471,476,484,495,504,516"], ["a", 77, "648,645"],
	["a", 79, "510,518,532,555,584,621,662,702,732,762"], ["a", 89, "923,920,911,906,896,888,881"],
	["a", 96, "713,716,722"], ["b", 99, "1174,1179"],
	["b", 101, "1344,1336,1332,1326,1320,1313,1307,1300,1294,1290,1284,1278,1272,1267,1262"],
	["b", 116, "1257,1254,1252,1250,1247,1243,1240,1237,1233,1228,1224,1213,1197,1172,1133,1085,1034,993,956,923,895,873,848,818,789,764,743,713,688,653,623,597,576,552,538,524"],
	["b", 152, "470,473,480,493"], ["b", 156, "628,625,621"],
	["b", 159, "460,472,480,493,508,522,534,542,552,563,577"],
	["b", 170, "716,712,700,684,656,633,611,584,551,518,459,411,369,330"],
	["b", 184, "150,158,176,198,218,236,254,270,285,298,309,321,328,339,356,379,400,441,491,534,567,597,617,640,656,675"],
	["b", 210, "744,740,734,730,722"], ["b", 215, "607,610,616"],
	["c", 218, "533,541,547"], ["c", 221, "660,654,640,626,610,603"],
	["c", 227, "418,428,443,467,493,519,541,565,580,596,611,625,634"],
	["c", 240, "741,732,720,706,695,682,661,638,612,582,562,537,513,491,475,461,448,438"],
	["c", 258, "393,393"],
	["c", 260, "444,444,444,442,436,426,415,398,380,366,352,338,326,312,300,281,266,250,238,229"],
	["c", 280, "163,170,177"]
];
sar.forEach(run => {
	let b = block[run[0]];
	run[2].split(",").forEach((v, i) => {
		add("price", "rect", {x: X0 + STEP * (run[1] + i) - 3, y: b[1] + v / b[3] - 3, width: 6, height: 6, fill: "#ffff90", stroke: "none"});
	});
});

/* last price, trades and drawings */
add("price", "line", {x1: 136, x2: 2300, y1: 378, y2: 378, stroke: "#999a0e", "stroke-width": 3});
add("price", "line", {x1: 246, y1: 586, x2: 1082, y2: 519, stroke: "#b01217", "stroke-width": 1.5});
add("price", "line", {x1: 1552, y1: 477, x2: 2020, y2: 383, stroke: "#b01217", "stroke-width": 1.5});
add("price", "line", {x1: 1671, y1: 586, x2: 2244, y2: 332, stroke: "#0a80f5", "stroke-width": 2});
add("price", "line", {x1: 2112, y1: 390, x2: 2326, y2: 390, stroke: "#0d5aa8", "stroke-dasharray": "18 7", "stroke-width": 1.5});
[[233, 586], [1542, 477]].forEach(p => add("price", "path", {d: "M" + p + "v-6l11 6-11 6z", fill: "#00ffff", stroke: "none"}));
[[1090, 519], [2027, 383]].forEach(p => add("price", "path", {d: "M" + p + "v-6l-12 6 12 6z", fill: "#ffffff", stroke: "none"}));
[[249, 592], [1557, 486]].forEach(p => add("price", "path", {d: "M" + p + "l-6 8h4v8h4v-8h4z", fill: "#8fa0a9", stroke: "none"}));
[[1075, 494], [2013, 375]].forEach(p => add("price", "path", {d: "M" + p + "l-6-7h4v-9h4v9h4z", fill: "#8fa0a9", stroke: "none"}));

[
	[249, 617, "Buy#29", "buy"], [249, 636, "1.00", "buy"], [1557, 512, "Buy#31", "buy"], [1557, 530, "1.00", "buy"],
	[1075, 450, "1.00", ""], [1075, 468, "Sell", ""], [2013, 332, "1.00", ""], [2013, 350, "Sell", ""]
].forEach(m => {
	let el = document.createElement("span");
	el.className = "mark " + m[3];
	el.textContent = m[2];
	place("price", el, m[0], m[1]);
	document.querySelector("#price .plot").appendChild(el);
});

/* DMI */
add("dmi", "line", {x1: 136, x2: 2112, y1: 902, y2: 902, stroke: "#46685a", "stroke-width": 3});
add("dmi", "line", {x1: 136, x2: 2112, y1: 1004, y2: 1004, stroke: "#6ba0a8", "stroke-width": 1.5});
line("dmi", "#b51317", {
	d: "260,388 287,347 320,395 350,412 385,450 418,470 430,520 445,545 478,542 493,568 550,565 562,480 575,465 590,490 605,480 640,540 655,555 680,538 710,585 722,593 750,555 785,570 805,528 828,490 855,500 878,450 893,445 908,375 940,405 970,430 990,425 1025,475 1050,397 1080,450 1115,448 1130,425 1160,475 1210,525 1250,458 1290,510 1340,555 1368,580 1385,530 1400,540 1422,460 1450,460 1475,492 1515,548 1530,515 1568,510",
	e: "0,510 13,402 60,445 92,487 107,455 125,485 160,498 190,505 210,530 235,545 255,492 275,500 292,527 315,450 335,450 348,395 358,338 370,365 395,295 412,285 437,295 465,360 490,395 503,355 530,355 545,378 560,370 572,325 583,335 595,290 622,290 660,320 675,335 700,390 727,432 740,363 770,405 780,460 795,470 810,455 820,490 835,430 865,480 900,493 925,450 950,455 965,362 980,362 995,388 1030,370 1045,418 1058,370 1090,420 1120,443 1145,480 1160,435 1190,425 1220,440 1255,480 1310,520 1355,580 1380,540 1415,545 1440,552 1460,500 1490,515 1507,515 1530,545 1568,545",
	f: "0,545 25,495 45,490 60,400 75,425 95,475 140,515 190,530 210,515 270,530 290,380 308,335 322,335 350,390 362,350 388,340 405,380 445,385 465,430 480,437 495,412 525,447 535,425 575,465 587,445 602,455 615,365 628,370 641,265 660,330 682,355 700,310 720,292 735,315 760,330 775,370 790,372 800,352 815,420 832,453 853,455"
});
line("dmi", "#08a80d", {
	d: "260,462 290,485 325,528 340,505 378,525 395,470 420,495 432,300 445,285 470,338 485,305 525,310 550,355 575,400 590,365 605,385 620,338 655,332 685,375 700,365 710,305 745,385 775,365 790,405 840,465 855,445 890,480 920,520 935,450 950,440 975,450 1015,395 1045,410 1060,462 1095,465 1130,530 1158,563 1175,500 1200,482 1225,500 1250,528 1268,515 1278,460 1290,460 1320,370 1370,290 1395,345 1422,400 1450,415 1475,390 1490,350 1515,360 1530,392 1568,440",
	e: "0,450 25,505 90,478 105,500 125,495 185,543 200,515 225,508 265,540 292,450 345,490 360,540 400,585 437,595 450,530 530,575 545,573 600,610 675,625 695,540 712,525 767,572 780,435 820,440 845,475 858,440 905,470 930,500 980,552 990,488 1030,525 1045,475 1060,525 1085,548 1100,490 1135,417 1155,430 1190,475 1230,497 1250,465 1260,432 1283,420 1300,378 1322,375 1348,298 1370,340 1415,385 1430,350 1485,415 1507,400 1523,325 1568,372",
	f: "0,370 50,425 72,485 95,403 122,395 138,342 152,335 190,343 235,390 270,403 290,480 320,498 338,438 390,480 440,513 455,465 490,500 540,518 590,548 605,548 618,573 630,580 640,600 672,597 735,628 758,635 773,558 800,570 815,505 853,523"
});
line("dmi", "#0bb0b6", {
	d: "260,475 300,475 325,468 370,475 418,512 440,490 480,460 525,405 550,393 610,427 650,403 693,396 730,355 765,352 795,348 820,375 855,420 890,455 925,457 960,485 1000,520 1040,535 1110,570 1160,545 1195,567 1240,577 1300,575 1335,530 1375,465 1400,458 1470,495 1520,468 1568,483",
	e: "0,485 50,500 110,540 180,570 220,588 340,598 370,560 400,505 430,450 450,435 500,415 575,362 640,280 675,240 695,250 730,287 768,290 800,355 850,420 890,465 935,500 975,482 1080,468 1130,492 1190,535 1255,562 1300,555 1335,510 1365,470 1440,430 1500,450 1540,425 1568,420",
	f: "0,412 40,430 100,475 130,483 190,452 270,448 290,465 325,465 350,482 450,478 475,500 570,512 600,500 640,440 700,355 758,277 800,280 853,347"
});
line("dmi", "#b20cb8", {
	d: "260,388 320,412 370,445 425,490 480,460 550,435 590,468 640,442 690,405 722,375 760,387 830,390 870,410 920,405 965,422 1030,480 1100,520 1170,535 1230,565 1290,573 1350,530 1400,515 1465,537 1490,525 1525,485 1568,472",
	e: "0,472 90,510 140,515 250,550 340,583 400,545 440,515 500,507 550,460 600,380 640,345 680,322 730,327 765,310 840,325 900,380 970,413 1030,450 1100,490 1180,507 1240,515 1310,523 1370,498 1480,492 1510,480 1568,425",
	f: "0,430 40,430 110,465 190,433 250,455 295,473 340,465 445,462 470,480 525,495 605,492 680,452 760,390 810,372 853,370"
}, 1.5);

//%R is red over 80, cyan under 20
let pr = points({
	d: "260,345 273,270 287,290 299,180 312,270 325,252 338,312 352,250 367,270 380,335 391,445 404,370 420,430 432,580 445,583 458,502 470,502 485,570 498,505 525,555 538,488 552,460 563,335 577,305 590,330 603,283 617,440 630,490 643,585 656,562 670,440 683,440 696,395 710,585 722,540 735,462 748,440 762,495 775,505 788,425 801,275 815,203 828,228 841,265 854,285 868,215 881,150 915,150 932,250 947,318 960,318 973,340 1000,480 1012,530 1027,490 1040,450 1052,375 1065,480 1080,515 1094,510 1106,383 1119,405 1131,190 1145,212 1158,355 1172,500 1185,565 1198,510 1211,505 1224,510 1238,375 1251,335 1265,410 1278,515 1291,602 1304,603 1317,588 1330,602 1343,588 1357,598 1370,545 1383,488 1396,502 1410,440 1422,398 1450,370 1463,402 1476,297 1490,455 1503,440 1515,470 1528,305 1541,328 1554,285 1568,292",
	e: "0,295 13,183 27,243 40,232 54,280 67,250 80,330 93,343 107,227 120,307 133,292 146,303 160,432 173,395 185,322 199,478 212,480 225,572 238,515 252,263 265,340 280,490 292,425 304,250 318,290 331,302 344,232 358,290 370,152 383,152 397,177 436,162 450,222 463,172 477,212 503,183 542,205 556,153 569,190 583,172 620,205 635,168 648,187 662,187 675,218 690,280 715,348 728,310 740,195 754,295 768,272 780,510 795,553 807,450 835,283 848,330 860,425 885,402 900,452 912,400 926,275 940,288 951,152 980,188 991,253 1005,195 1018,167 1031,218 1045,345 1058,177 1070,187 1083,215 1098,310 1125,385 1138,525 1150,480 1163,370 1177,345 1190,387 1205,358 1230,360 1245,440 1258,515 1271,530 1284,570 1297,545 1310,585 1323,558 1349,605 1362,555 1376,533 1390,533 1415,545 1429,603 1442,545 1455,452 1468,450 1480,415 1495,347 1507,350 1523,508 1537,485 1568,430",
	f: "0,428 10,395 20,280 33,212 46,225 59,152 72,300 86,430 112,540 125,565 138,603 152,603 165,558 178,558 191,583 205,530 218,522 231,540 244,532 258,530 270,500 284,240 297,162 310,170 323,153 337,227 362,160 390,177 405,153 440,182 457,222 470,202 483,208 495,165 510,243 535,205 549,152 562,292 575,220 588,177 602,295 615,263 638,268 655,350 680,403 695,300 707,208 735,163 760,203 773,297 785,292 800,230 813,553 826,400 840,505 853,495"
});
for (let i = 1; i < pr.length; i++) {
	let y = pr[i][1];
	let color = y > 1004 ? "#12a8ae" : y < 902 && y < pr[i - 1][1] || y < 885 ? "#b5171a" : "#b0ba90";
	add("dmi", "line", {x1: pr[i - 1][0], y1: pr[i - 1][1], x2: pr[i][0], y2: y, stroke: color, "stroke-width": 1.3});
}

/* MACD */
const diff = [-2, 0, 4, 5, 5, 4, 4, 4, 3, 0, 0, 0, 0, -10, -15, -18, -19, -18, -18, -19, -18, -17, -12, -5, 5, 7, 10, 6, 3, 0,
	-5, -4, 0, 0, -8, -11, -9, -6, -5, -4, 0, 5, 10, 17, 20, 18, 17, 22, 24, 33, 35, 31, 22, 16, 14, 8, 4, 0, -4, -4,
	0, -3, -3, -3, 0, 4, 8, 7, 4, 0, -6, -8, -9, -10, -6, 0, 0, -5, -10, -14, -20, -28, -34, -38, -38, -32, -27, -23, -13, 6,
	10, 10, 15, 8, 5, 3, 5, 8, 10, 18, 30, 34, 34, 32, 30, 23, 19, 18, 16, 13, 12, 12, 9, 8, 5, 3, 2, 2, 2, 2,
	2, 2, 2, 5, 8, 12, 22, 35, 45, 50, 56, 57, 57, 45, 42, 32, 24, 22, 17, 15, 11, 11, 14, 15, 18, 20, 20, 18, 15, 10,
	6, 2, -6, -13, -16, -10, -13, -13, -22, -33, -35, -30, -20, -17, -20, -20, -20, -20, -18, -12, -7, 0, 12, 20, 18, 20, 20, 20, 12, 27,
	35, 33, 25, 16, 5, -10, -14, -7, -5, -5, -5, -5, -5, -7, -18, -22, -28, -32, -35, -45, -55, -55, -48, -42, -36, -32, -30, -24, -15, -7,
	0, 5, 10, 6, 4, 4, 4, 4, 8, 14, 18, 20, 30, 30, 22, 17, 9, 3, -5, -13, -14, -12, -10, -6, -3, 0, 0, 4, 4, 10,
	25, 33, 37, 36, 37, 37, 37, 37, 37, 33, 30, 25, 20, 19, 16, 12, 10, 7, 4, 4, 0, 0, 0, 0, 6, 7, 11, 11, 8, 4,
	5, 9, 14, 18, 18, 13, 7, 5, 0, -5, -8, -14, -17];
diff.forEach((v, i) => {
	let h = Math.abs(v) / SY;
	add("macd", "rect", {x: X0 + STEP * i - 3, y: v > 0 ? 1198 - h : 1198, width: 6, height: h, fill: v > 0 ? "#f0534f" : "#26a69a", stroke: "none"});
});
add("macd", "line", {x1: 136, x2: 2112, y1: 1198, y2: 1198, stroke: "#c5a9a9", "stroke-width": 2});
line("macd", "#8d5c78", {
	d: "260,1020 300,1010 380,1010 425,1018 445,1035 490,1062 535,1073 600,1045 650,1055 695,1062 722,1082 785,1080 830,1058 880,1030 920,993 960,995 1020,1010 1080,1020 1150,1008 1220,1030 1270,1028 1300,1048 1340,1085 1370,1115 1398,1122 1430,1095 1475,1080 1530,1088 1568,1065",
	e: "0,1062 30,1035 50,1022 110,1012 160,1018 210,1025 265,1020 330,1018 360,1000 385,960 410,920 435,900 465,893 545,895 595,875 650,865 680,877 727,912 768,918 810,965 845,968 880,990 915,998 950,985 975,965 1030,940 1045,947 1065,915 1085,903 1120,925 1150,950 1220,955 1260,980 1310,1035 1355,1090 1400,1115 1435,1124 1480,1105 1510,1090 1568,1100",
	f: "0,1095 40,1075 70,1045 110,1055 160,1088 195,1095 270,1082 300,1045 340,1010 400,972 440,963 520,967 600,973 650,955 685,962 745,937 800,945 830,967 853,980"
});
line("macd", "#a265a8", {
	d: "260,1018 320,1014 420,1016 470,1030 520,1052 560,1062 620,1052 700,1058 760,1075 800,1077 860,1060 920,1030 960,1012 1020,1010 1140,1015 1240,1026 1290,1033 1340,1062 1400,1098 1440,1098 1510,1090 1568,1085",
	e: "0,1085 60,1050 120,1032 180,1018 340,1020 385,1005 420,970 460,938 510,912 570,902 640,880 685,875 770,900 830,940 890,972 940,988 980,977 1050,955 1080,935 1120,927 1180,940 1260,960 1310,990 1370,1045 1410,1078 1445,1102 1568,1098",
	f: "0,1100 60,1080 120,1062 180,1078 240,1088 290,1083 330,1058 380,1025 430,995 490,976 600,970 680,965 760,945 800,946 853,962"
});

/* value axis */
const ticks = {
	price: [[231, "0.95200"], [293, "0.95150"], [446, "0.95050"], [522, "0.95000"], [598, "0.94950"], [675, "0.94900"], [751, "0.94850"], [815, "0.94800"]],
	dmi: [[848, "70"], [868, "60"], [902, "50"], [968, "30"], [1038, "10"], [1072, "0"], [1093, "-10"]],
	macd: [[1125, "0.0004"], [1134, "0.0003"], [1155, "0.0002"], [1219, "-0.0001"], [1240, "-0.0002"], [1261, "-0.0003"], [1270, "-0.0004"]]
};
const tags = {
	price: [[329, "0.95126", "#ff5078"], [339, "0.95120", "#ffff90"], [368, "0.95101", "#a3a3a8"], [390, "0.95087", "#0080ff", "#fff"], [377, "0.95095", "#ffff00"], [408, "0.95075", "#00ff80"]],
	dmi: [[942, "38.7065", "#00ffff"], [949, "36.2096", "#ff00ff"], [983, "26.3722", "#ff0000", "#fff"], [1008, "18.9075", "#00ff00"]],
	macd: [[1181, "0.00008...", "#da8fb0"], [1173, "0.000114...", "#ee8bee"], [1206, "-0.00003...", "#f0534f"], [1198, "0", "#f0d0d0"]]
};
const addMarks = {price: 370, dmi: 886, macd: 1129};

function icon(id, cls) {
	return "<svg class='" + cls + "'><use href='#" + id + "'/></svg>";
}

for (let name in panels) {
	let axis = document.querySelector("#" + name + " .axis");
	ticks[name].forEach(t => {
		let el = document.createElement("span");
		el.className = "tick";
		el.textContent = t[1];
		place(name, el, null, t[0]);
		axis.appendChild(el);
	});
	tags[name].forEach(t => {
		let el = document.createElement("span");
		el.className = "tag";
		el.textContent = t[1];
		el.style.background = t[2];
		if (t[3]) {
			el.style.color = t[3];
		}
		place(name, el, null, t[0]);
		axis.appendChild(el);
	});

	let plot = document.querySelector("#" + name + " .plot");
	let btns = document.createElement("div");
	btns.className = "scaleBtns";
	btns.innerHTML = icon("s-plus", "i20") + icon("s-auto", "i20") + icon("s-find", "i20");
	plot.appendChild(btns);
	let mark = document.createElement("div");
	mark.className = "addMark";
	mark.innerHTML = icon("plus", "i16");
	place(name, mark, 2311, addMarks[name]);
	plot.appendChild(mark);
}

document.querySelectorAll(".acts").forEach(el => {
	el.innerHTML = icon("l-eye", "i20") + icon("l-cog", "i20") + icon("l-bin", "i20");
});

/* time axis */
let times = document.getElementById("times");
["09:00", "09:30", "10:00", "10:30", "11:00", "11:30", "12:00", "12:30", "13:00", "13:31"].forEach((t, i) => {
	let el = document.createElement("span");
	el.textContent = t;
	el.style.left = ((gridX[i] - 136) / 2190 * 100).toFixed(3) + "%";
	times.appendChild(el);
});
let cursor = document.createElement("span");
cursor.className = "cursor";
cursor.textContent = "2023/10/27 12:14 (207)";
cursor.style.left = ((1587 - 136) / 2190 * 100).toFixed(3) + "%";
times.appendChild(cursor);
```
